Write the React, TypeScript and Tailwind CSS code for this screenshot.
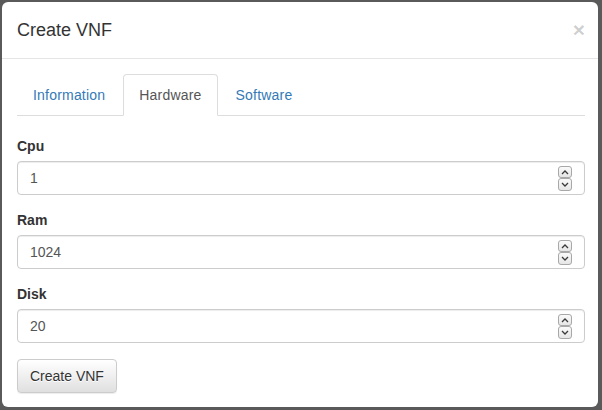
import React from "react";

const font = { fontFamily: '"Liberation Sans", Arial, Helvetica, sans-serif' };

function Spinner() {
  return (
    <div className="absolute right-[12px] top-[4px] flex flex-col w-[14px]">
      <div className="h-[12px] border border-[#a8a8a8] rounded-[3px] bg-gradient-to-b from-[#fafafa] to-[#e6e6e6] flex items-center justify-center">
        <svg width="8" height="5" viewBox="0 0 8 5">
          <path d="M1 4 L4 1 L7 4" fill="none" stroke="#3a3a3a" strokeWidth="1.3" />
        </svg>
      </div>
      <div className="h-[13px] border border-[#a8a8a8] rounded-[3px] bg-gradient-to-b from-[#fafafa] to-[#e6e6e6] flex items-center justify-center">
        <svg width="8" height="5" viewBox="0 0 8 5">
          <path d="M1 1 L4 4 L7 1" fill="none" stroke="#3a3a3a" strokeWidth="1.3" />
        </svg>
      </div>
    </div>
  );
}

function Field({ label, value }: { label: string; value: string }) {
  return (
    <div className="mb-[15px]">
      <div className="text-[14px] leading-[20px] font-bold text-[#333] mb-[5px]">{label}</div>
      <div className="relative h-[34px] border border-[#ccc] rounded-[4px] bg-white shadow-[inset_0_1px_1px_rgba(0,0,0,0.075)] px-[12px] py-[6px] text-[14px] leading-[20px] text-[#555]">
        {value}
        <Spinner />
      </div>
    </div>
  );
}

export default function App() {
  return (
    <div className="w-[602px] h-[410px] bg-[#5a5a5a] pt-[2px] pl-[2px] overflow-hidden" style={font}>
      <div className="w-[596px] h-[405px] bg-white rounded-[6px] flex flex-col">
        <div className="h-[57px] border-b border-[#e5e5e5] pl-[15px] pr-[13px] pt-[15px] flex justify-between items-start">
          <div className="text-[18px] leading-[26px] text-[#333]">Create VNF</div>
          <div className="text-[21px] leading-[21px] font-bold text-[rgba(0,0,0,0.2)] mt-[2px]">×</div>
        </div>
        <div className="pl-[15px] pr-[13px] pt-[15px]">
          <div className="flex border-b border-[#ddd] h-[42px]">
            <div className="mr-[2px] -mb-px px-[15px] py-[10px] leading-[20px] text-[14px] tracking-[0.2px] border border-transparent rounded-t-[4px] text-[#337ab7]">
              Information
            </div>
            <div className="mr-[2px] -mb-px px-[15px] py-[10px] leading-[20px] text-[14px] tracking-[0.2px] border border-[#ddd] border-b-white bg-white rounded-t-[4px] text-[#555]">
              Hardware
            </div>
            <div className="mr-[2px] -mb-px px-[15px] py-[10px] leading-[20px] text-[14px] tracking-[0.2px] border border-transparent rounded-t-[4px] text-[#337ab7]">
              Software
            </div>
          </div>
          <div className="pt-[20px]">
            <Field label="Cpu" value="1" />
            <Field label="Ram" value="1024" />
            <Field label="Disk" value="20" />
            <button className="mt-px h-[34px] px-[12px] py-[6px] text-[14px] leading-[20px] text-[#333] border border-[#ccc] rounded-[4px] bg-gradient-to-b from-white to-[#e0e0e0] shadow-[inset_0_1px_0_rgba(255,255,255,0.15),0_1px_1px_rgba(0,0,0,0.075)] [text-shadow:0_1px_0_#fff]">
              Create VNF
            </button>
          </div>
        </div>
      </div>
    </div>
  );
}
